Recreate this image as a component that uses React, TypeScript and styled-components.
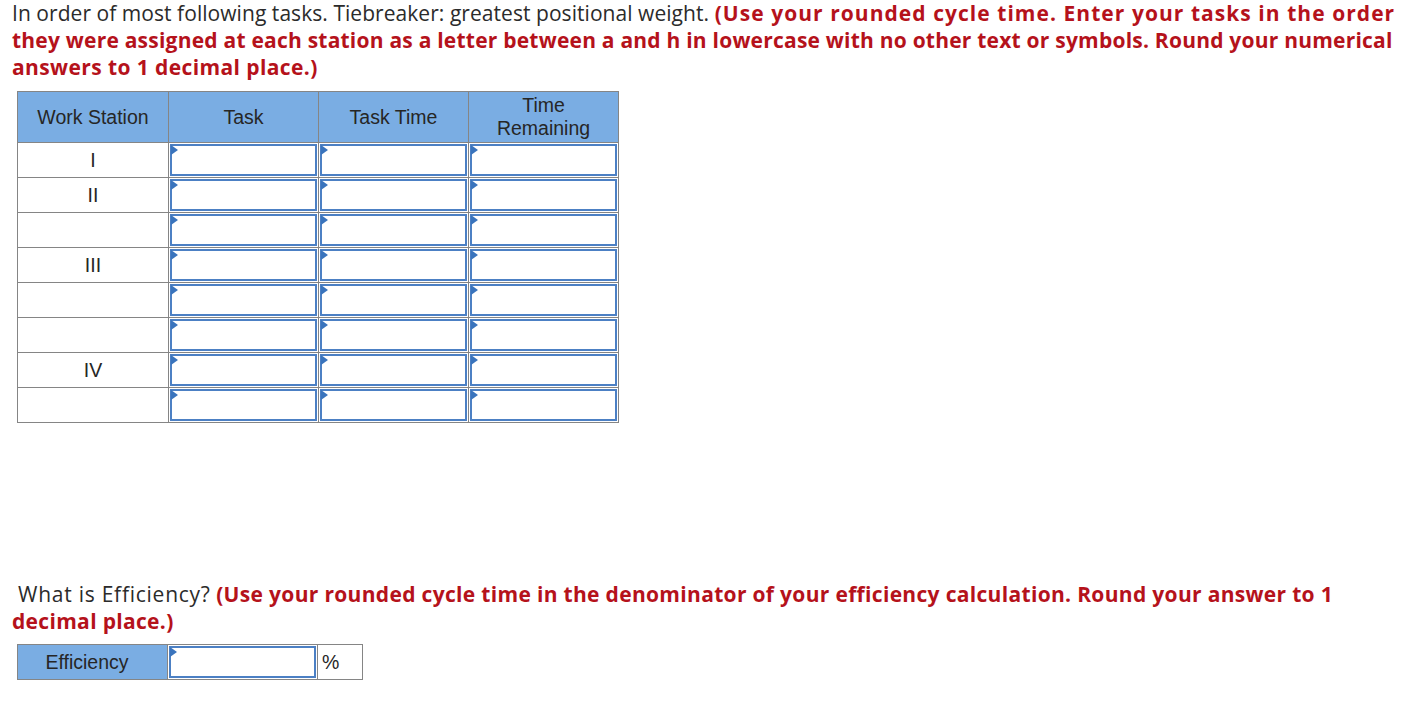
import React from "react";
import styled, { createGlobalStyle } from "styled-components";

const GlobalStyle = createGlobalStyle`
  html, body {
    margin: 0;
    padding: 0;
    background: #ffffff;
  }
`;

// 페이지 래퍼
const Page = styled.div`
  width: 1405px;
  height: 704px;
  padding: 0 0 0 12px;
  box-sizing: border-box;
  font-family: "Open Sans", "Liberation Sans", sans-serif;
  color: #2b2b2b;
`;

const Prompt = styled.p`
  margin: 0;
  font-size: 21px;
  line-height: 27px;
  letter-spacing: 0.05px;
`;

const Lead = styled.span`
  padding-left: 6px;
  letter-spacing: 0.75px;
`;

// 빨간 안내 문구 (줄마다 자간 조정)
const Hint = styled.strong<{ $spacing?: number }>`
  color: #b5121b;
  font-weight: 700;
  white-space: nowrap;
  letter-spacing: ${(p) => p.$spacing ?? 0.4}px;
`;

const WrapHint = styled(Hint)`
  white-space: normal;
`;

const Grid = styled.table<{ $gap?: number }>`
  border-collapse: collapse;
  margin: ${(p) => p.$gap ?? 10}px 0 0 5px;
  font-family: "Liberation Sans", Arial, sans-serif;
  font-size: 19.5px;
  color: #262626;
`;

const HeadCell = styled.th`
  width: 150px;
  height: 51px;
  padding: 0;
  box-sizing: border-box;
  background: #7aade3;
  border: 1px solid #858585;
  font-weight: 400;
  line-height: 23px;
  text-align: center;
`;

const Row = styled.tr<{ $groupStart?: boolean }>`
  height: 35px;
  & > td {
    border-top: 1px solid ${(p) => (p.$groupStart ? "#000" : "#858585")};
  }
`;

const StationCell = styled.td`
  width: 150px;
  padding: 0;
  border: 1px solid #858585;
  text-align: center;
  vertical-align: middle;
`;

const EntryCell = styled.td`
  width: 150px;
  padding: 1px;
  box-sizing: border-box;
  border: 1px solid #858585;
`;

// 입력 상자
const InputBox = styled.div`
  position: relative;
  height: 32px;
  box-sizing: border-box;
  border: 2px solid #4c80c4;
  background: #fff;
`;

const Marker = styled.span`
  position: absolute;
  left: -1px;
  top: -1px;
  width: 0;
  height: 0;
  border-top: 5px solid transparent;
  border-bottom: 5px solid transparent;
  border-left: 7px solid #3a74bd;
`;

const Question = styled(Prompt)`
  margin-top: 158px;
`;

const EffLabel = styled.td`
  width: 150px;
  height: 35px;
  padding: 0 11px 0 0;
  box-sizing: border-box;
  background: #7aade3;
  border: 1px solid #858585;
  text-align: center;
`;

const UnitCell = styled.td`
  width: 45px;
  padding: 0 0 0 4px;
  box-sizing: border-box;
  border: 1px solid #858585;
`;

const Entry = () => (
  <EntryCell>
    <InputBox>
      <Marker />
    </InputBox>
  </EntryCell>
);

const stations = ["I", "II", "", "III", "", "", "IV", ""];
const groupStarts = [false, true, false, true, false, false, true, false];

export default function App() {
  return (
    <Page>
      <GlobalStyle />
      <Prompt>
        In order of most following tasks. Tiebreaker: greatest positional weight.{" "}
        <Hint $spacing={1.05}>(Use your rounded cycle time. Enter your tasks in the order</Hint>
        <br />
        <Hint $spacing={0.22}>
          they were assigned at each station as a letter between a and h in lowercase with no other
          text or symbols. Round your numerical
        </Hint>
        <br />
        <Hint>answers to 1 decimal place.)</Hint>
      </Prompt>

      <Grid>
        <thead>
          <tr>
            <HeadCell>Work Station</HeadCell>
            <HeadCell>Task</HeadCell>
            <HeadCell>Task Time</HeadCell>
            <HeadCell>
              Time
              <br />
              Remaining
            </HeadCell>
          </tr>
        </thead>
        <tbody>
          {stations.map((s, i) => (
            <Row key={i} $groupStart={groupStarts[i]}>
              <StationCell>{s}</StationCell>
              <Entry />
              <Entry />
              <Entry />
            </Row>
          ))}
        </tbody>
      </Grid>

      <Question>
        <Lead>What is Efficiency?</Lead>{" "}
        <WrapHint $spacing={0.32}>
          (Use your rounded cycle time in the denominator of your efficiency calculation. Round your
          answer to 1 decimal place.)
        </WrapHint>
      </Question>

      <Grid $gap={9}>
        <tbody>
          <Row>
            <EffLabel>Efficiency</EffLabel>
            <Entry />
            <UnitCell>%</UnitCell>
          </Row>
        </tbody>
      </Grid>
    </Page>
  );
}
